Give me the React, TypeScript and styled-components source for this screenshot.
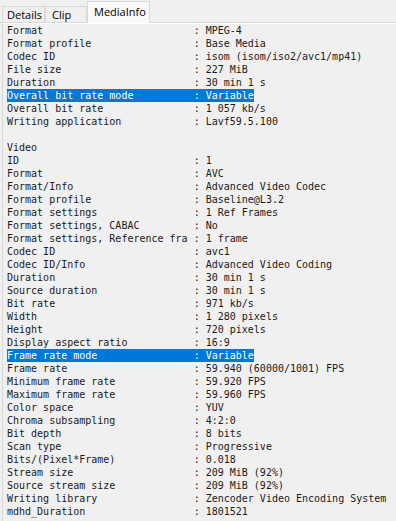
import styled, { createGlobalStyle } from 'styled-components';

type Line = { label?: string; value?: string; selected?: boolean; heading?: string };

const lines: Line[] = [
  { label: 'Format', value: 'MPEG-4' },
  { label: 'Format profile', value: 'Base Media' },
  { label: 'Codec ID', value: 'isom (isom/iso2/avc1/mp41)' },
  { label: 'File size', value: '227 MiB' },
  { label: 'Duration', value: '30 min 1 s' },
  { label: 'Overall bit rate mode', value: 'Variable', selected: true },
  { label: 'Overall bit rate', value: '1 057 kb/s' },
  { label: 'Writing application', value: 'Lavf59.5.100' },
  {},
  { heading: 'Video' },
  { label: 'ID', value: '1' },
  { label: 'Format', value: 'AVC' },
  { label: 'Format/Info', value: 'Advanced Video Codec' },
  { label: 'Format profile', value: 'Baseline@L3.2' },
  { label: 'Format settings', value: '1 Ref Frames' },
  { label: 'Format settings, CABAC', value: 'No' },
  { label: 'Format settings, Reference frames', value: '1 frame' },
  { label: 'Codec ID', value: 'avc1' },
  { label: 'Codec ID/Info', value: 'Advanced Video Coding' },
  { label: 'Duration', value: '30 min 1 s' },
  { label: 'Source duration', value: '30 min 1 s' },
  { label: 'Bit rate', value: '971 kb/s' },
  { label: 'Width', value: '1 280 pixels' },
  { label: 'Height', value: '720 pixels' },
  { label: 'Display aspect ratio', value: '16:9' },
  { label: 'Frame rate mode', value: 'Variable', selected: true },
  { label: 'Frame rate', value: '59.940 (60000/1001) FPS' },
  { label: 'Minimum frame rate', value: '59.920 FPS' },
  { label: 'Maximum frame rate', value: '59.960 FPS' },
  { label: 'Color space', value: 'YUV' },
  { label: 'Chroma subsampling', value: '4:2:0' },
  { label: 'Bit depth', value: '8 bits' },
  { label: 'Scan type', value: 'Progressive' },
  { label: 'Bits/(Pixel*Frame)', value: '0.018' },
  { label: 'Stream size', value: '209 MiB (92%)' },
  { label: 'Source stream size', value: '209 MiB (92%)' },
  { label: 'Writing library', value: 'Zencoder Video Encoding System' },
  { label: 'mdhd_Duration', value: '1801521' },
];

const tabs = [
  { name: 'Details', width: 43 },
  { name: 'Clip', width: 42 },
  { name: 'MediaInfo', width: 63 },
];
const activeTab = 'MediaInfo';

// MediaInfo text view: labels cut/padded to 30 columns, then " : value"
function formatLine(line: Line) {
  if (line.heading) return line.heading;
  if (!line.label) return ' ';
  return `${line.label.slice(0, 30).padEnd(30)} : ${line.value}`;
}

export default function App() {
  return (
    <>
      <GlobalStyle />
      <Window>
        <TabBar>
          {tabs.map((tab) => (
            <Tab key={tab.name} $active={tab.name === activeTab} $width={tab.width}>
              {tab.name}
            </Tab>
          ))}
        </TabBar>
        <Pane>
          {lines.map((line, i) => (
            <Row key={i}>
              <Text $selected={!!line.selected}>{formatLine(line)}</Text>
            </Row>
          ))}
        </Pane>
      </Window>
    </>
  );
}

const GlobalStyle = createGlobalStyle`
  html, body {
    margin: 0;
    padding: 0;
    background: #f0f0f0;
  }
`;

const Window = styled.div`
  width: 396px;
  height: 521px;
  overflow: hidden;
  background: #f0f0f0;
  display: flex;
  flex-direction: column;
`;

const TabBar = styled.div`
  display: flex;
  align-items: flex-end;
  height: 23px;
  padding-left: 2px;
  border-bottom: 1px solid #d9d9d9;
  box-sizing: border-box;
  font-family: 'Open Sans', 'Noto Sans', sans-serif;
  font-size: 11px;
  color: #000;
`;

const Tab = styled.div<{ $active: boolean; $width: number }>`
  box-sizing: border-box;
  flex: none;
  width: ${({ $width }) => $width}px;
  height: ${({ $active }) => ($active ? '22px' : '16px')};
  margin-bottom: ${({ $active }) => ($active ? '-1px' : '0')};
  padding: ${({ $active }) => ($active ? '2px 0 0 6px' : '0 0 0 6px')};
  border: 1px solid #d9d9d9;
  border-bottom: ${({ $active }) => ($active ? '1px solid #f9f9f9' : 'none')};
  background: ${({ $active }) => ($active ? '#f9f9f9' : '#f0f0f0')};
  line-height: 15px;
  white-space: nowrap;
  overflow: hidden;

  &:first-child {
    padding-left: 4px;
  }
`;

const Pane = styled.div`
  flex: 1;
  margin-left: 2px;
  border-left: 1px solid #d9d9d9;
  border-top: 1px solid #ffffff;
  padding: 0 0 0 4px;
  box-sizing: border-box;
  font-family: 'DejaVu Sans Mono', 'Liberation Mono', monospace;
  font-size: 10px;
`;

const Row = styled.div`
  height: 13px;
  line-height: 13px;
  white-space: pre;
`;

const Text = styled.span<{ $selected: boolean }>`
  display: inline-block;
  vertical-align: top;
  height: 13px;
  color: ${({ $selected }) => ($selected ? '#ffffff' : '#1a1a1a')};
  background: ${({ $selected }) => ($selected ? '#0078d7' : 'transparent')};
`;
